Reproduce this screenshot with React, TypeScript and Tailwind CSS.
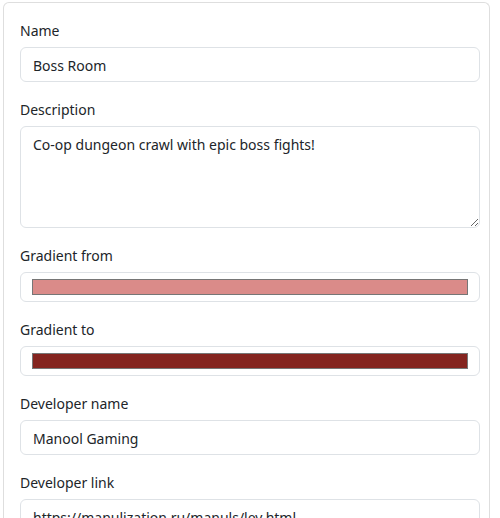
import React from "react";

function Field({ label, children }: { label: string; children: React.ReactNode }) {
  return (
    <div className="mb-4">
      <label className="block h-[23px] pt-[1px] leading-[22px] mb-[5px] text-[14px] text-[#212529]">{label}</label>
      {children}
    </div>
  );
}

function TextInput({ value }: { value: string }) {
  return (
    <input
      readOnly
      value={value}
      className="block w-full h-[35px] px-3 pt-[2px] text-[14px] text-[#212529] bg-white border border-[#dee2e6] rounded-md outline-none"
      style={{ fontFamily: "inherit" }}
    />
  );
}

function ColorInput({ color }: { color: string }) {
  return (
    <div className="flex items-center w-full h-[30px] pl-[11px] pr-[11px] bg-white border border-[#dee2e6] rounded-md">
      <div className="w-full h-[16px] border border-[#767676]" style={{ backgroundColor: color }} />
    </div>
  );
}

export default function App() {
  return (
    <div
      className="bg-white w-[500px] h-[518px] overflow-hidden"
      style={{ fontFamily: '"Noto Sans", "Open Sans", sans-serif' }}
    >
      <div className="mt-[2px] ml-[3px] w-[487px] border-t border-l border-r border-[#dedede] rounded-t-md pt-[16px] pl-4 pr-[9px] pb-4">
        <Field label="Name">
          <TextInput value="Boss Room" />
        </Field>
        <Field label="Description">
          <textarea
            readOnly
            value="Co-op dungeon crawl with epic boss fights!"
            className="block w-full h-[102px] px-3 pt-[7px] pb-[6px] text-[14px] leading-[22px] text-[#212529] bg-white border border-[#dee2e6] rounded-md outline-none resize-y"
            style={{ fontFamily: "inherit" }}
          />
        </Field>
        <Field label="Gradient from">
          <ColorInput color="#da8b89" />
        </Field>
        <Field label="Gradient to">
          <ColorInput color="#84241f" />
        </Field>
        <Field label="Developer name">
          <TextInput value="Manool Gaming" />
        </Field>
        <Field label="Developer link">
          <TextInput value="https://manulization.ru/manuls/lev.html" />
        </Field>
      </div>
    </div>
  );
}
